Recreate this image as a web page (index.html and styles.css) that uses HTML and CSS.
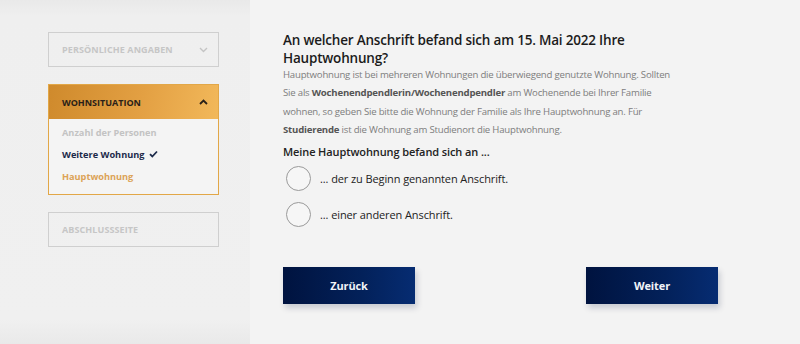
FILE: index.html
```html
<!DOCTYPE html>
<html lang="de">
<head>
<meta charset="utf-8">
<link rel="stylesheet" href="styles.css">
</head>
<body>
<div class="page">
  <aside class="sidebar">
    <div class="step step-closed">
      <span class="step-title">Persönliche Angaben</span>
      <svg class="chev" width="9" height="6" viewBox="0 0 9 6"><path d="M1 1l3.5 3.5L8 1" fill="none" stroke="#c4c4c4" stroke-width="1.4"/></svg>
    </div>
    <div class="step step-open">
      <div class="step-head">
        <span class="step-title">Wohnsituation</span>
        <svg class="chev" width="9" height="6" viewBox="0 0 9 6"><path d="M1 5l3.5-3.5L8 5" fill="none" stroke="#2a2118" stroke-width="1.8"/></svg>
      </div>
      <ul class="substeps">
        <li class="sub sub-todo">Anzahl der Personen</li>
        <li class="sub sub-done">Weitere Wohnung <svg width="9" height="8" viewBox="0 0 9 8"><path d="M1 4.2l2.3 2.3L8 1.5" fill="none" stroke="#1c2a4a" stroke-width="1.8"/></svg></li>
        <li class="sub sub-current">Hauptwohnung</li>
      </ul>
    </div>
    <div class="step step-closed">
      <span class="step-title">Abschlussseite</span>
    </div>
  </aside>
  <main class="content">
    <h1 class="question">An welcher Anschrift befand sich am 15. Mai 2022 Ihre Hauptwohnung?</h1>
    <p class="hint">Hauptwohnung ist bei mehreren Wohnungen die überwiegend genutzte Wohnung. Sollten Sie als <b>Wochenendpendlerin/Wochenendpendler</b> am Wochenende bei Ihrer Familie wohnen, so geben Sie bitte die Wohnung der Familie als Ihre Hauptwohnung an. Für <b>Studierende</b> ist die Wohnung am Studienort die Hauptwohnung.</p>
    <div class="label">Meine Hauptwohnung befand sich an ...</div>
    <label class="option"><span class="radio"></span><span>... der zu Beginn genannten Anschrift.</span></label>
    <label class="option"><span class="radio"></span><span>... einer anderen Anschrift.</span></label>
    <div class="actions">
      <button class="btn">Zurück</button>
      <button class="btn">Weiter</button>
    </div>
  </main>
</div>
</body>
</html>
```
FILE: styles.css
```css
* { box-sizing: border-box; }
html, body { margin: 0; padding: 0; }
body {
  background: #f3f3f3;
  font-family: "Open Sans", "Noto Sans", sans-serif;
  width: 800px;
  height: 344px;
  overflow: hidden;
}
.page {
  display: flex;
  height: 344px;
}
.sidebar {
  width: 250px;
  flex: none;
  padding: 32px 0 0 48px;
  background: linear-gradient(to bottom, #e9e9e9 0px, #efefef 16px, #f0f0f0 320px, #e9e9e9 344px);
  display: flex;
  flex-direction: column;
  gap: 17px;
}
.step {
  width: 171px;
  border: 1.5px solid #cfcfcf;
}
.step-closed {
  height: 35px;
  display: flex;
  align-items: center;
  justify-content: space-between;
  padding: 0 10px 0 13px;
}
.step-title {
  font-size: 9px;
  font-weight: 700;
  text-transform: uppercase;
  letter-spacing: 0.1px;
  color: #c6c6c6;
}
.step-open {
  border-color: #e2a747;
}
.step-head {
  height: 34px;
  display: flex;
  align-items: center;
  justify-content: space-between;
  padding: 0 10px 0 13px;
  background: linear-gradient(100deg, #cf8a2c 0%, #e3a043 55%, #f2b85a 100%);
}
.step-head .step-title { color: #2a2118; letter-spacing: 0; }
.substeps {
  list-style: none;
  margin: 0;
  padding: 3px 0 6px 13px;
  background: #f4f4f4;
}
.sub {
  font-size: 9.2px;
  font-weight: 700;
  height: 22px;
  line-height: 22px;
}
.sub-todo { color: #c3c3c3; }
.sub-done { color: #1c2a4a; }
.sub-done svg { margin-left: 2px; }
.sub-current { color: #dca357; }
.content {
  flex: 1;
  padding: 31px 82px 0 33px;
}
.question {
  margin: 0;
  font-size: 13.5px;
  line-height: 18px;
  font-weight: 600;
  letter-spacing: -0.2px;
  color: #1b1b1b;
}
.hint {
  margin: -1px 0 0;
  max-width: 388px;
  font-size: 9.6px;
  line-height: 18.4px;
  letter-spacing: -0.2px;
  color: #7d7d7d;
}
.hint b { color: #555; }
.label {
  margin-top: 4px;
  font-size: 11px;
  font-weight: 600;
  letter-spacing: -0.1px;
  color: #222;
  line-height: 16px;
}
.option {
  display: flex;
  align-items: center;
  gap: 9px;
  margin-top: 5px;
  padding-left: 3px;
  font-size: 11px;
  letter-spacing: -0.1px;
  color: #222;
  height: 27px;
}
.option + .option { margin-top: 9px; }
.radio {
  width: 25px;
  height: 25px;
  border-radius: 50%;
  border: 1.5px solid #9a9a9a;
  background: #f6f6f6;
  flex: none;
}
.actions {
  display: flex;
  justify-content: space-between;
  margin-top: 39px;
}
.btn {
  width: 132px;
  height: 37px;
  border: none;
  color: #f2f4f8;
  font-family: inherit;
  font-size: 11px;
  font-weight: 700;
  letter-spacing: -0.1px;
  background: linear-gradient(90deg, #00133f 0%, #03215a 60%, #062c72 100%);
  box-shadow: 2px 4px 6px rgba(0, 20, 60, 0.18);
}
```
